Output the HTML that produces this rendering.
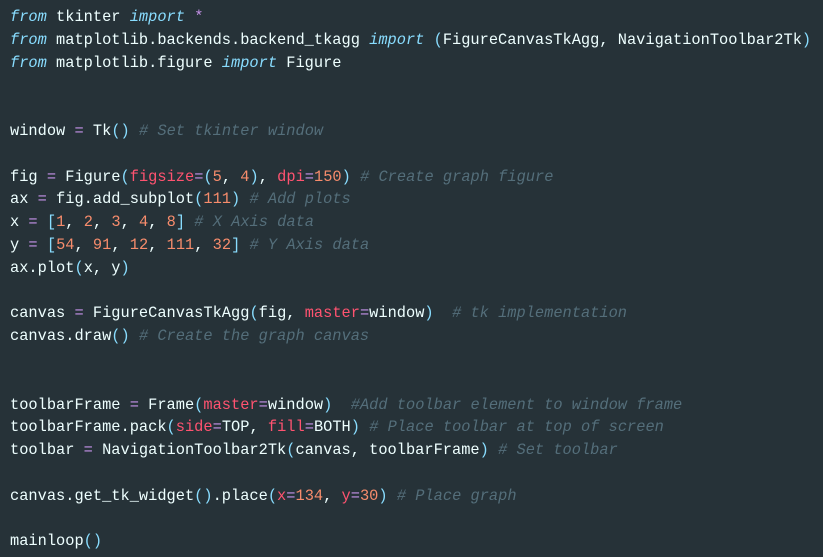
<!DOCTYPE html>
<html><head><meta charset="utf-8"><style>
html,body{margin:0;padding:0;background:#263238;width:823px;height:557px;overflow:hidden}
pre{margin:0;padding:6px 0 0 10px;font-family:"Liberation Mono",monospace;font-size:15.35px;line-height:22.8px;color:#eeffff}
.k{color:#89ddff;font-style:italic}
.o{color:#c792ea}
.b{color:#89ddff}
.n{color:#f78c6c}
.a{color:#ff5370}
.c{color:#546e7a;font-style:italic}
</style></head><body><pre><span class="k">from</span> tkinter <span class="k">import</span> <span class="o">*</span>
<span class="k">from</span> matplotlib.backends.backend_tkagg <span class="k">import</span> <span class="b">(</span>FigureCanvasTkAgg, NavigationToolbar2Tk<span class="b">)</span>
<span class="k">from</span> matplotlib.figure <span class="k">import</span> Figure


window <span class="o">=</span> Tk<span class="b">()</span> <span class="c"># Set tkinter window</span>

fig <span class="o">=</span> Figure<span class="b">(</span><span class="a">figsize</span><span class="o">=</span><span class="b">(</span><span class="n">5</span>, <span class="n">4</span><span class="b">)</span>, <span class="a">dpi</span><span class="o">=</span><span class="n">150</span><span class="b">)</span> <span class="c"># Create graph figure</span>
ax <span class="o">=</span> fig.add_subplot<span class="b">(</span><span class="n">111</span><span class="b">)</span> <span class="c"># Add plots</span>
x <span class="o">=</span> <span class="b">[</span><span class="n">1</span>, <span class="n">2</span>, <span class="n">3</span>, <span class="n">4</span>, <span class="n">8</span><span class="b">]</span> <span class="c"># X Axis data</span>
y <span class="o">=</span> <span class="b">[</span><span class="n">54</span>, <span class="n">91</span>, <span class="n">12</span>, <span class="n">111</span>, <span class="n">32</span><span class="b">]</span> <span class="c"># Y Axis data</span>
ax.plot<span class="b">(</span>x, y<span class="b">)</span>

canvas <span class="o">=</span> FigureCanvasTkAgg<span class="b">(</span>fig, <span class="a">master</span><span class="o">=</span>window<span class="b">)</span>  <span class="c"># tk implementation</span>
canvas.draw<span class="b">()</span> <span class="c"># Create the graph canvas</span>


toolbarFrame <span class="o">=</span> Frame<span class="b">(</span><span class="a">master</span><span class="o">=</span>window<span class="b">)</span>  <span class="c">#Add toolbar element to window frame</span>
toolbarFrame.pack<span class="b">(</span><span class="a">side</span><span class="o">=</span>TOP, <span class="a">fill</span><span class="o">=</span>BOTH<span class="b">)</span> <span class="c"># Place toolbar at top of screen</span>
toolbar <span class="o">=</span> NavigationToolbar2Tk<span class="b">(</span>canvas, toolbarFrame<span class="b">)</span> <span class="c"># Set toolbar</span>

canvas.get_tk_widget<span class="b">()</span>.place<span class="b">(</span><span class="a">x</span><span class="o">=</span><span class="n">134</span>, <span class="a">y</span><span class="o">=</span><span class="n">30</span><span class="b">)</span> <span class="c"># Place graph</span>

mainloop<span class="b">()</span></pre></body></html>
